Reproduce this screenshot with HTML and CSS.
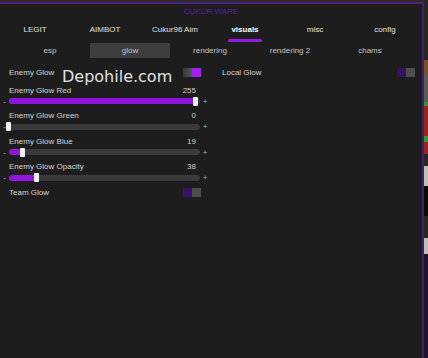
FILE: index.html
```html
<!DOCTYPE html>
<html lang="en">

<head>
    <meta charset="UTF-8" />
    <meta name="viewport" content="width=device-width, initial-scale=1.0" />
    <title>Cukur Ware</title>
    <link rel="stylesheet" href="styles.css">
</head>

<body>
    <div class="menu">
        <div class="title">CUKUR WARE</div>

        <div class="tabs">
            <div class="tab">LEGIT</div>
            <div class="tab">AIMBOT</div>
            <div class="tab">Cukur96 Aim</div>
            <div class="tab active">visuals</div>
            <div class="tab">misc</div>
            <div class="tab">config</div>
        </div>

        <div class="subtabs">
            <div class="subtab">esp</div>
            <div class="subtab active">glow</div>
            <div class="subtab">rendering</div>
            <div class="subtab">rendering 2</div>
            <div class="subtab">chams</div>
        </div>

        <div class="content">
            <div class="column">
                <div class="row">
                    <span>Enemy Glow</span>
                    <span class="toggle on"><i></i><i></i></span>
                </div>

                <div class="slider-group first">
                    <div class="slider-label"><span>Enemy Glow Red</span><span class="value">255</span></div>
                    <div class="slider">
                        <span class="minus">-</span>
                        <div class="track"><div class="fill" style="width: 98%"></div></div>
                        <span class="plus">+</span>
                    </div>
                </div>

                <div class="slider-group">
                    <div class="slider-label"><span>Enemy Glow Green</span><span class="value">0</span></div>
                    <div class="slider">
                        <span class="minus">-</span>
                        <div class="track"><div class="fill" style="width: 0%"></div></div>
                        <span class="plus">+</span>
                    </div>
                </div>

                <div class="slider-group">
                    <div class="slider-label"><span>Enemy Glow Blue</span><span class="value">19</span></div>
                    <div class="slider">
                        <span class="minus">-</span>
                        <div class="track"><div class="fill" style="width: 7.3%"></div></div>
                        <span class="plus">+</span>
                    </div>
                </div>

                <div class="slider-group">
                    <div class="slider-label"><span>Enemy Glow Opacity</span><span class="value">38</span></div>
                    <div class="slider">
                        <span class="minus">-</span>
                        <div class="track"><div class="fill" style="width: 14.7%"></div></div>
                        <span class="plus">+</span>
                    </div>
                </div>

                <div class="row team">
                    <span>Team Glow</span>
                    <span class="toggle"><i></i><i></i></span>
                </div>
            </div>

            <div class="column">
                <div class="row">
                    <span>Local Glow</span>
                    <span class="toggle"><i></i><i></i></span>
                </div>
            </div>

            <div class="watermark">Depohile.com</div>
        </div>
    </div>

    <!-- bit of the game visible behind the menu -->
    <div class="game">
        <div class="g-dark" style="height: 60px"></div>
        <div class="g-orange" style="height: 14px"></div>
        <div class="g-grey" style="height: 28px"></div>
        <div class="g-green" style="height: 4px"></div>
        <div class="g-red" style="height: 30px"></div>
        <div class="g-green" style="height: 6px"></div>
        <div class="g-red" style="height: 12px"></div>
        <div class="g-dark" style="height: 12px"></div>
        <div class="g-light" style="height: 20px"></div>
        <div class="g-black" style="height: 30px"></div>
        <div class="g-dark" style="height: 22px"></div>
        <div class="g-light" style="height: 16px"></div>
        <div class="g-purple" style="height: 104px"></div>
    </div>
</body>

</html>
```

FILE: styles.css
```css
html,
body {
    margin: 0;
    height: 100%;
    overflow: hidden;
}

body {
    display: flex;
    background-color: #2a2a2a;
    font-family: "Liberation Sans", Arial, sans-serif;
    font-size: 8px;
    color: #d6d6d6;
}

.menu {
    position: relative;
    box-sizing: border-box;
    width: 424px;
    height: calc(100% - 2px);
    margin-top: 2px;
    border-top: 2px solid #4e2080;
    border-right: 2px solid #40206a;
    background-color: #1d1d1d;
}

.title {
    height: 16px;
    line-height: 16px;
    text-align: center;
    color: #5a1ea0;
}

/* main tabs */
.tabs {
    display: flex;
    height: 23px;
}

.tab {
    width: 70px;
    line-height: 20px;
    text-align: center;
    color: #e2e2e2;
}

.tab.active {
    font-weight: bold;
    color: #fff;
}

.tab.active::after {
    content: "";
    display: block;
    width: 34px;
    height: 3px;
    margin: -1px auto 0;
    border-radius: 2px;
    background-color: #9a18e4;
}

/* sub tabs */
.subtabs {
    display: flex;
    padding-left: 10px;
    height: 15px;
}

.subtab {
    width: 80px;
    line-height: 15px;
    text-align: center;
    color: #c4c4c4;
}

.subtab.active {
    background-color: #3e3e3e;
}

/* options */
.content {
    display: grid;
    grid-template-columns: 192px 193px;
    column-gap: 21px;
    align-items: start;
    padding: 9px 0 0 9px;
}

.row,
.slider-label {
    display: flex;
    justify-content: space-between;
    align-items: center;
    height: 11px;
    line-height: 11px;
}

.row.team {
    margin-top: 2px;
}

.slider-group {
    margin-bottom: 3.5px;
}

.slider-group.first {
    margin-top: 6.5px;
}

.value {
    padding-right: 5px;
    color: #cfcfcf;
}

.toggle {
    display: flex;
}

.toggle i {
    width: 9px;
    height: 9px;
}

.toggle i:first-child {
    background-color: #3a0f68;
}

.toggle i:last-child {
    background-color: #4e4e4e;
}

.toggle.on i:first-child {
    background: linear-gradient(to right, #3a3a3a, #555);
}

.toggle.on i:last-child {
    background-color: #a21ff2;
}

.slider {
    display: flex;
    align-items: center;
    height: 11px;
    margin: 0 -9px 0 -7px;
}

.minus,
.plus {
    color: #b5b5b5;
    line-height: 11px;
}

.minus {
    width: 7px;
    padding-left: 1px;
    box-sizing: border-box;
}

.plus {
    width: 10px;
    text-align: center;
}

.track {
    flex: 1;
    height: 6px;
    border-radius: 3px;
    background-color: #3a3a3a;
}

.fill {
    position: relative;
    height: 100%;
    border-radius: 3px;
    background-color: #9014dc;
}

.fill::after {
    content: "";
    position: absolute;
    right: -2px;
    top: -1.5px;
    width: 5px;
    height: 9px;
    border-radius: 1px;
    background-color: #f2f2f2;
}

.watermark {
    position: absolute;
    left: 62px;
    top: 65px;
    font-family: "DejaVu Sans", Verdana, sans-serif;
    font-size: 16px;
    line-height: 16px;
    color: #e2e2e2;
}

/* game strip at the right edge */
.game {
    width: 4px;
    display: flex;
    flex-direction: column;
}

.g-dark { background-color: #262626; }
.g-orange { background-color: #7a5420; }
.g-grey { background-color: #5a5a5a; }
.g-green { background-color: #2f9a2f; }
.g-red { background-color: #9a2418; }
.g-light { background-color: #bdbdbd; }
.g-black { background-color: #0a0a0a; }
.g-purple { background-color: #1e1428; }
```
